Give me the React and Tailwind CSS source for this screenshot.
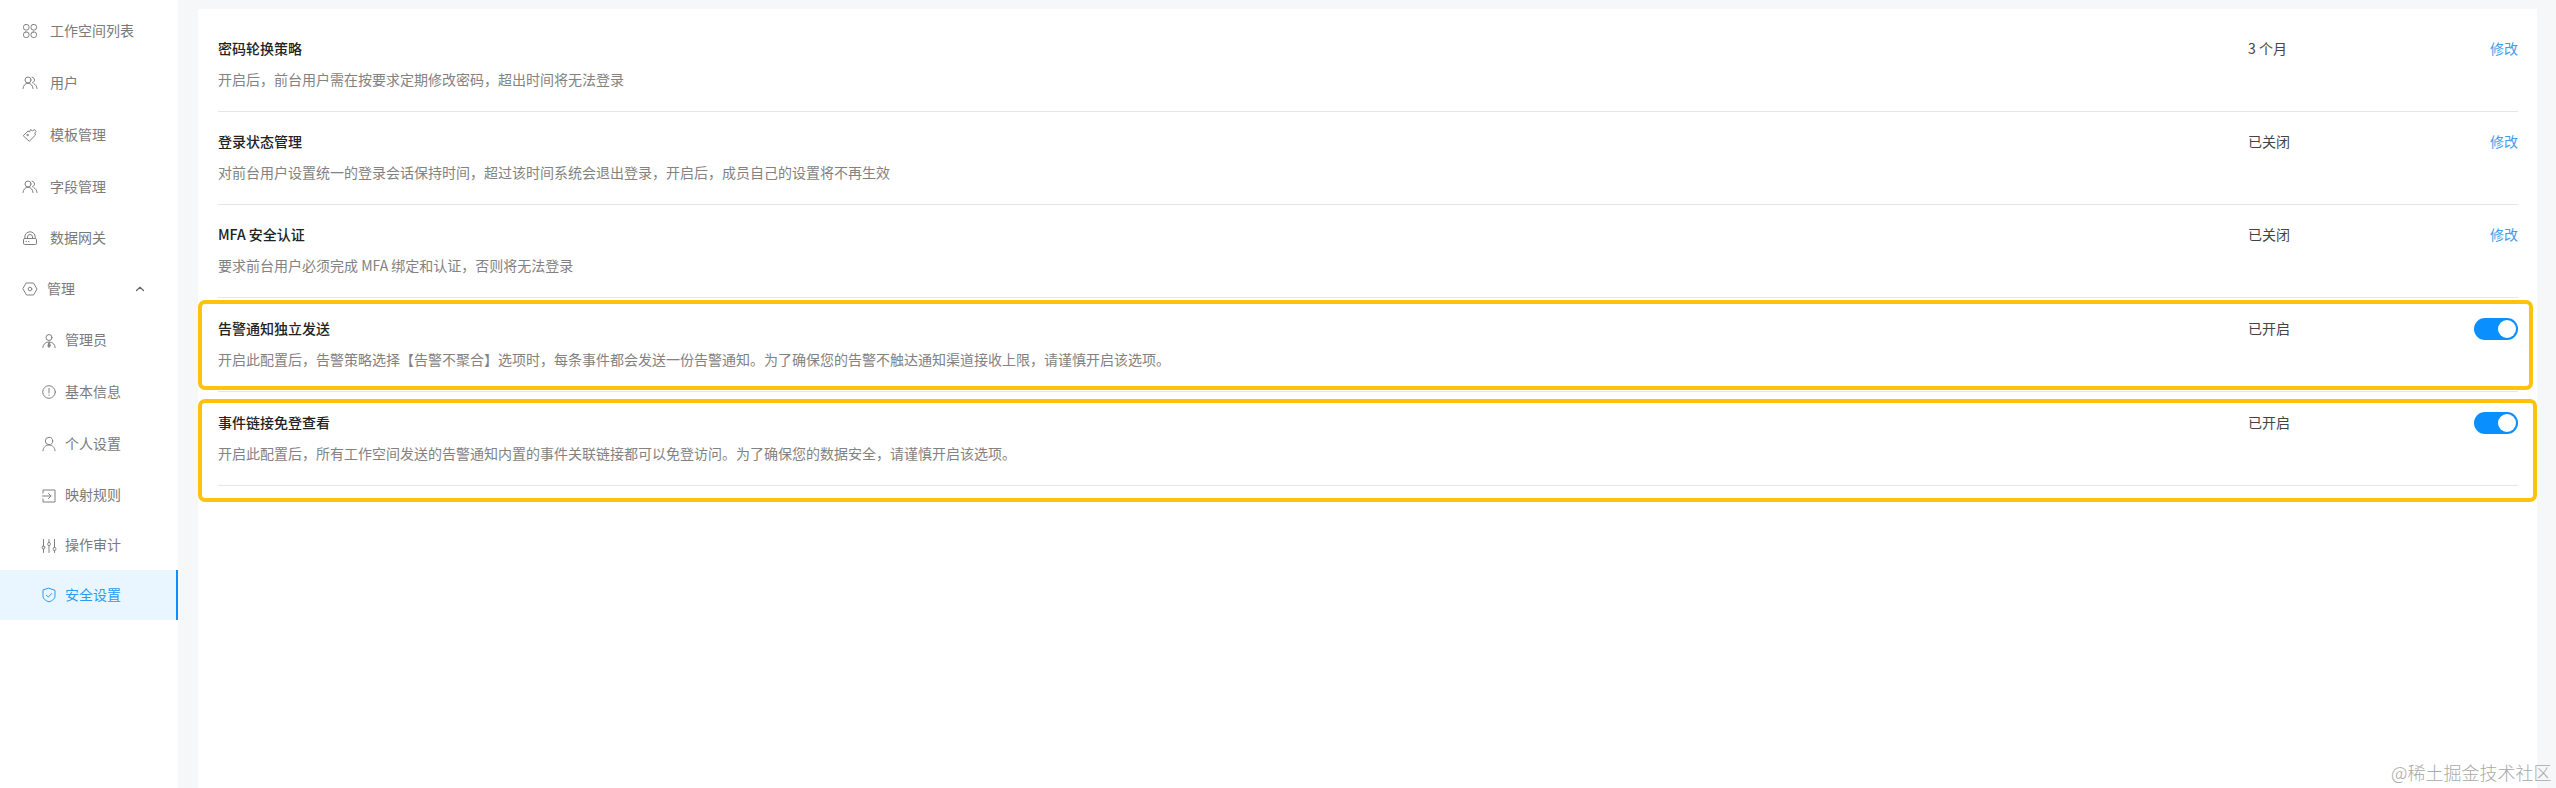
import React from "react";

const S = ({ children, size = 16 }) => (
  <svg width={size} height={size} viewBox="0 0 16 16" fill="none" stroke="currentColor" strokeWidth="1" strokeLinecap="round" strokeLinejoin="round" className="shrink-0">
    {children}
  </svg>
);

const I = {
  grid: (
    <S>
      <rect x="1.5" y="1.5" width="5.5" height="5.5" rx="2.2" />
      <rect x="9" y="1.5" width="5.5" height="5.5" rx="2.2" />
      <rect x="1.5" y="9" width="5.5" height="5.5" rx="2.2" />
      <rect x="9" y="9" width="5.5" height="5.5" rx="2.2" />
    </S>
  ),
  users: (
    <S>
      <circle cx="6" cy="5" r="3" />
      <path d="M1 13.5c.2-3 2.2-5.2 5-5.2s4.8 2.200 5 5.200" />
      <path d="M10 2.200c1.500.2 2.500 1.400 2.500 2.800 0 1.300-.8 2.300-2 2.700" />
      <path d="M12 8.800c1.700.7 2.800 2.500 3 4.700" />
    </S>
  ),
  tag: (
    <S>
      <path d="M1.500 8.500 6 4l1.500 1 1-2.500 2 1.300 2-1.300 1.500 2-1.200 1.500.7 2L7.500 14z" />
      <circle cx="5.500" cy="8" r=".7" />
    </S>
  ),
  gateway: (
    <S>
      <path d="M2.800 8.500V7a5.200 5.200 0 0 1 10.400 0v1.500" />
      <path d="M5.500 8.500V7a2.500 2.500 0 0 1 5 0v1.500" />
      <rect x="1.500" y="8.500" width="13" height="6" rx="1.200" />
      <path d="M4 11.500h.5M6.500 11.500h.5" />
    </S>
  ),
  hex: (
    <S>
      <path d="M4.500 2h7L15 8l-3.500 6h-7L1 8z" />
      <circle cx="8" cy="8" r="1.800" />
    </S>
  ),
  admin: (
    <S>
      <circle cx="8" cy="4.500" r="3" />
      <path d="M1.800 14.500c.3-3.200 2.500-5.500 6.200-5.500s5.900 2.300 6.200 5.500" />
      <path d="M8 9.500 6.800 13 8 14.500 9.200 13z" fill="currentColor" />
    </S>
  ),
  info: (
    <S>
      <circle cx="8" cy="8" r="6.300" />
      <path d="M8 4.500v4.500M8 11v.4" />
    </S>
  ),
  user: (
    <S>
      <circle cx="8" cy="5" r="3.700" />
      <path d="M2 14.700c.3-3.200 2.600-5.700 6-5.700s5.700 2.500 6 5.700" />
    </S>
  ),
  map: (
    <S>
      <path d="M2 5V2h12v12H2v-3" />
      <path d="M1.500 8H10M7.500 5.500 10 8l-2.500 2.500" />
    </S>
  ),
  sliders: (
    <S>
      <path d="M2.500 1.500v6.500M2.500 11v3.500M8 1.500v3M8 7.500v7M13.500 1.500v8M13.500 12.500v2" />
      <rect x="1.200" y="8" width="2.600" height="3" rx="1" />
      <rect x="6.700" y="4.500" width="2.600" height="3" rx="1" />
      <rect x="12.200" y="9.500" width="2.600" height="3" rx="1" />
    </S>
  ),
  shield: (
    <S>
      <path d="M8 1.300 14 3.300V9c0 3-3 5-6 5.800C5 14 2 12 2 9V3.300z" />
      <path d="M5.300 8.200 7.300 10l3.400-3.500" />
    </S>
  ),
};

const nav = [
  { t: "工作空间列表", i: I.grid, h: "h-[52px]" },
  { t: "用户", i: I.users, h: "h-[52px]" },
  { t: "模板管理", i: I.tag, h: "h-[52px]" },
  { t: "字段管理", i: I.users, h: "h-[52px]" },
  { t: "数据网关", i: I.gateway, h: "h-[50px]" },
];

const sub = [
  { t: "管理员", i: I.admin, h: "h-[51px]" },
  { t: "基本信息", i: I.info, h: "h-[52px]" },
  { t: "个人设置", i: I.user, h: "h-[52px]" },
  { t: "映射规则", i: I.map, h: "h-[51px]" },
  { t: "操作审计", i: I.sliders, h: "h-[49px]" },
];

const Toggle = () => (
  <div className="flex h-[22px] w-[44px] items-center justify-end rounded-full bg-[#0a8fff] p-[2px]">
    <div className="h-[18px] w-[18px] rounded-full bg-white" />
  </div>
);

const rows = [
  {
    title: "密码轮换策略",
    desc: "开启后，前台用户需在按要求定期修改密码，超出时间将无法登录",
    value: "3 个月",
    cls: "h-[94px] pt-[21px] border-b",
  },
  {
    title: "登录状态管理",
    desc: "对前台用户设置统一的登录会话保持时间，超过该时间系统会退出登录，开启后，成员自己的设置将不再生效",
    value: "已关闭",
    cls: "h-[93px] pt-[20px] border-b",
  },
  {
    title: "MFA 安全认证",
    desc: "要求前台用户必须完成 MFA 绑定和认证，否则将无法登录",
    value: "已关闭",
    cls: "h-[93px] pt-[20px] border-b",
  },
  {
    title: "告警通知独立发送",
    desc: "开启此配置后，告警策略选择【告警不聚合】选项时，每条事件都会发送一份告警通知。为了确保您的告警不触达通知渠道接收上限，请谨慎开启该选项。",
    value: "已开启",
    toggle: true,
    cls: "h-[94px] pt-[20px] border-b",
  },
  {
    title: "事件链接免登查看",
    desc: "开启此配置后，所有工作空间发送的告警通知内置的事件关联链接都可以免登访问。为了确保您的数据安全，请谨慎开启该选项。",
    value: "已开启",
    toggle: true,
    cls: "h-[94px] pt-[20px] border-b",
  },
];

export default function App() {
  return (
    <div className="relative flex h-[788px] w-[2556px] overflow-hidden bg-[#f5f7f9] font-['Noto_Sans_CJK_SC','Noto_Sans',sans-serif] text-[14px]">
      <aside className="flex w-[178px] shrink-0 flex-col bg-white pt-[5px] text-[#7a7a7a]">
        {nav.map((n) => (
          <div key={n.t} className={`flex items-center gap-[12px] pl-[22px] ${n.h}`}>
            <span className="text-[#808080]">{n.i}</span>
            <span className="pb-[2px]">{n.t}</span>
          </div>
        ))}
        <div className="flex h-[52px] items-center pl-[22px] pr-[32px]">
          <span className="text-[#808080]">{I.hex}</span>
          <span className="ml-[9px] flex-1 pb-[2px]">管理</span>
          <svg width="12" height="12" viewBox="0 0 12 12" fill="none" stroke="#666" strokeWidth="1.2" strokeLinecap="round" strokeLinejoin="round">
            <path d="M2.500 7.500 6 4.200l3.500 3.300" />
          </svg>
        </div>
        {sub.map((n) => (
          <div key={n.t} className={`flex items-center gap-[8px] pl-[41px] ${n.h}`}>
            <span className="text-[#808080]">{n.i}</span>
            <span className="pb-[2px]">{n.t}</span>
          </div>
        ))}
        <div className="flex h-[50px] items-center gap-[8px] border-r-2 border-[#0a8fff] bg-[#e9f6ff] pl-[41px] text-[#2a9bf2]">
          {I.shield}
          <span className="pb-[2px]">安全设置</span>
        </div>
      </aside>

      <main className="ml-[20px] mt-[9px] w-[2339px] shrink-0 bg-white pl-[20px] pr-[19px] pt-[9px]">
        {rows.map((r) => (
          <div key={r.title} className={`flex border-[#e5e6e8] ${r.cls}`}>
            <div className="flex-1">
              <div className={`flex items-center pb-[2px] font-medium text-[#222] ${r.toggle ? "h-[22px]" : "h-[20px]"}`}>{r.title}</div>
              <div className={`leading-[20px] text-[#828282] ${r.toggle ? "mt-[9px]" : "mt-[10px]"}`}>{r.desc}</div>
            </div>
            <div className={`flex w-[180px] items-center self-start pb-[2px] text-[#444] ${r.toggle ? "h-[22px]" : "h-[20px]"}`}>{r.value}</div>
            <div className="flex w-[90px] justify-end self-start">
              {r.toggle ? <Toggle /> : <div className="flex h-[20px] items-center pb-[2px] text-[#3d9eea]">修改</div>}
            </div>
          </div>
        ))}
      </main>

      {/* Yellow annotation frames drawn over the screenshot */}
      <div className="absolute left-[198px] top-[300px] h-[90px] w-[2335px] rounded-[7px] border-4 border-[#fdc20c]" />
      <div className="absolute left-[198px] top-[399px] h-[103px] w-[2339px] rounded-[7px] border-4 border-[#fdc20c]" />

      {/* Watermark */}
      <div className="absolute left-[2391px] top-[759px] whitespace-nowrap text-[18px] font-light leading-[26px] text-[#a9a9a9]">
        @稀土掘金技术社区
      </div>
    </div>
  );
}
